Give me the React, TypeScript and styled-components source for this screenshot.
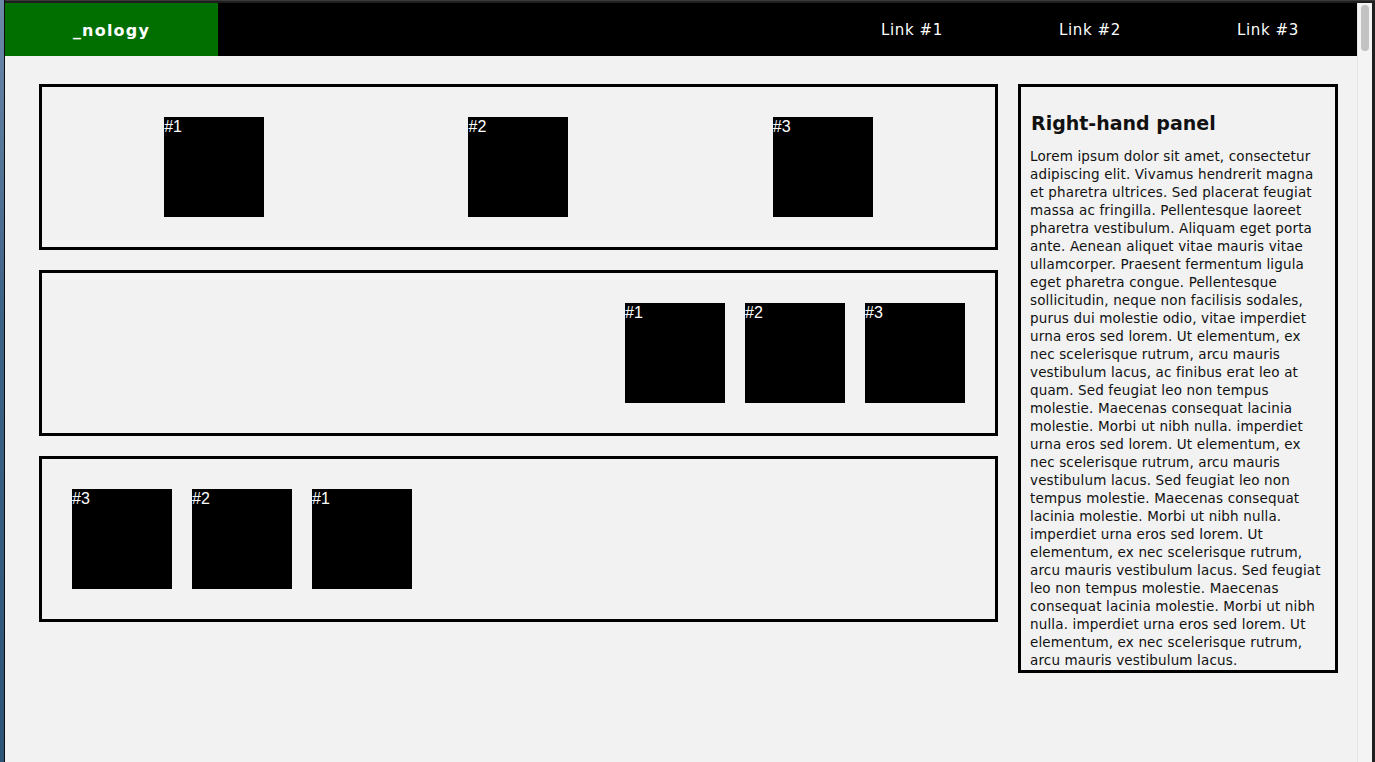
import styled, { createGlobalStyle } from "styled-components";

const GlobalStyle = createGlobalStyle`
  * {
    box-sizing: border-box;
  }
  html, body {
    margin: 0;
    padding: 0;
    height: 100%;
    overflow: hidden;
    background: #2a2a2a;
  }
  #root {
    height: 100%;
  }
`;

const panelLines = [
  "Lorem ipsum dolor sit amet, consectetur",
  "adipiscing elit. Vivamus hendrerit magna",
  "et pharetra ultrices. Sed placerat feugiat",
  "massa ac fringilla. Pellentesque laoreet",
  "pharetra vestibulum. Aliquam eget porta",
  "ante. Aenean aliquet vitae mauris vitae",
  "ullamcorper. Praesent fermentum ligula",
  "eget pharetra congue. Pellentesque",
  "sollicitudin, neque non facilisis sodales,",
  "purus dui molestie odio, vitae imperdiet",
  "urna eros sed lorem. Ut elementum, ex",
  "nec scelerisque rutrum, arcu mauris",
  "vestibulum lacus, ac finibus erat leo at",
  "quam. Sed feugiat leo non tempus",
  "molestie. Maecenas consequat lacinia",
  "molestie. Morbi ut nibh nulla. imperdiet",
  "urna eros sed lorem. Ut elementum, ex",
  "nec scelerisque rutrum, arcu mauris",
  "vestibulum lacus. Sed feugiat leo non",
  "tempus molestie. Maecenas consequat",
  "lacinia molestie. Morbi ut nibh nulla.",
  "imperdiet urna eros sed lorem. Ut",
  "elementum, ex nec scelerisque rutrum,",
  "arcu mauris vestibulum lacus. Sed feugiat",
  "leo non tempus molestie. Maecenas",
  "consequat lacinia molestie. Morbi ut nibh",
  "nulla. imperdiet urna eros sed lorem. Ut",
  "elementum, ex nec scelerisque rutrum,",
  "arcu mauris vestibulum lacus.",
];

type Layout = "around" | "end" | "reverse";

const rows: { layout: Layout; items: string[] }[] = [
  { layout: "around", items: ["#1", "#2", "#3"] },
  { layout: "end", items: ["#1", "#2", "#3"] },
  { layout: "reverse", items: ["#1", "#2", "#3"] },
];

export default function App() {
  return (
    <>
      <GlobalStyle />
      <Screen>
        <DesktopEdge />
        <Window>
          <Viewport>
            <Page>
              <Navbar>
                <Logo>_nology</Logo>
                <NavLinks>
                  <NavLink>Link #1</NavLink>
                  <NavLink>Link #2</NavLink>
                  <NavLink>Link #3</NavLink>
                </NavLinks>
              </Navbar>
              <Main>
                <Rows>
                  {rows.map((row, i) => (
                    <Row key={i} layout={row.layout}>
                      {row.items.map((item) => (
                        <Box key={item}>{item}</Box>
                      ))}
                    </Row>
                  ))}
                </Rows>
                <Aside>
                  <AsideTitle>Right-hand panel</AsideTitle>
                  <AsideText>
                    {panelLines.map((line, i) => (
                      <Line key={i}>{line}</Line>
                    ))}
                  </AsideText>
                </Aside>
              </Main>
            </Page>
            <Scrollbar>
              <Thumb />
            </Scrollbar>
          </Viewport>
        </Window>
      </Screen>
    </>
  );
}

const Screen = styled.div`
  display: flex;
  height: 100%;
  background: #2a2a2a;
`;

const DesktopEdge = styled.div`
  width: 5px;
  background: linear-gradient(180deg, #6d8aa8 0%, #3f6388 40%, #2f5476 100%);
  border-right: 1px solid #0b0b0b;
  flex-shrink: 0;
`;

const Window = styled.div`
  flex: 1;
  display: flex;
  flex-direction: column;
  padding-top: 2px;
  padding-right: 3px;
  border-top: 1px solid #3a3a3a;
  background: #1f1f1f;
`;

const Viewport = styled.div`
  flex: 1;
  display: flex;
  background: #f2f2f2;
  overflow: hidden;
`;

const Page = styled.div`
  flex: 1;
  display: flex;
  flex-direction: column;
  min-width: 0;
`;

const Scrollbar = styled.div`
  width: 15px;
  flex-shrink: 0;
  padding: 2px 3px 0 3px;
  background: #f4f4f4;
  border-left: 1px solid #e6e6e6;
`;

const Thumb = styled.div`
  height: 46px;
  border-radius: 5px;
  background: #c2c2c2;
`;

const Navbar = styled.nav`
  display: flex;
  height: 53px;
  padding-top: 1px;
  background: #000;
  font-family: "DejaVu Sans", "Noto Sans", sans-serif;
  color: #fff;
`;

const Logo = styled.div`
  width: 213px;
  margin-top: -1px;
  display: flex;
  align-items: center;
  justify-content: center;
  padding-top: 1px;
  background: #006f00;
  font-weight: 700;
  font-size: 16px;
  letter-spacing: 1.2px;
`;

const NavLinks = styled.div`
  margin-left: auto;
  display: flex;
`;

const NavLink = styled.a`
  width: 178px;
  display: flex;
  align-items: center;
  justify-content: center;
  font-size: 15px;
  letter-spacing: 0.6px;
  cursor: pointer;
`;

const Main = styled.main`
  display: grid;
  grid-template-columns: 959px 320px;
  column-gap: 20px;
  align-items: start;
  padding: 28px 19px 0 34px;
`;

const Rows = styled.div`
  display: flex;
  flex-direction: column;
  gap: 20px;
`;

const Row = styled.section<{ layout: Layout }>`
  display: flex;
  gap: 20px;
  border: 3px solid #000;
  padding: ${(p) => (p.layout === "around" ? "30px 20px" : "30px")};
  flex-direction: ${(p) => (p.layout === "reverse" ? "row-reverse" : "row")};
  justify-content: ${(p) =>
    p.layout === "around" ? "space-around" : "flex-end"};
  ${(p) => p.layout === "around" && "gap: 0;"}
`;

const Box = styled.div`
  width: 100px;
  height: 100px;
  flex-shrink: 0;
  padding-top: 1px;
  background: #000;
  color: #fff;
  font-family: "Liberation Sans", Arial, sans-serif;
  font-size: 16px;
  line-height: 18px;
`;

const Aside = styled.aside`
  border: 3px solid #000;
  padding: 0 9px 1px 9px;
  font-family: "DejaVu Sans", "Noto Sans", sans-serif;
  color: #111;
`;

const AsideTitle = styled.h2`
  margin: 24px 0 12px 1px;
  font-size: 19px;
  line-height: 24px;
  font-weight: 700;
`;

const AsideText = styled.p`
  margin: 0;
  font-size: 13.5px;
  line-height: 18px;
  letter-spacing: 0.15px;
`;

const Line = styled.span`
  display: block;
  white-space: nowrap;
`;
